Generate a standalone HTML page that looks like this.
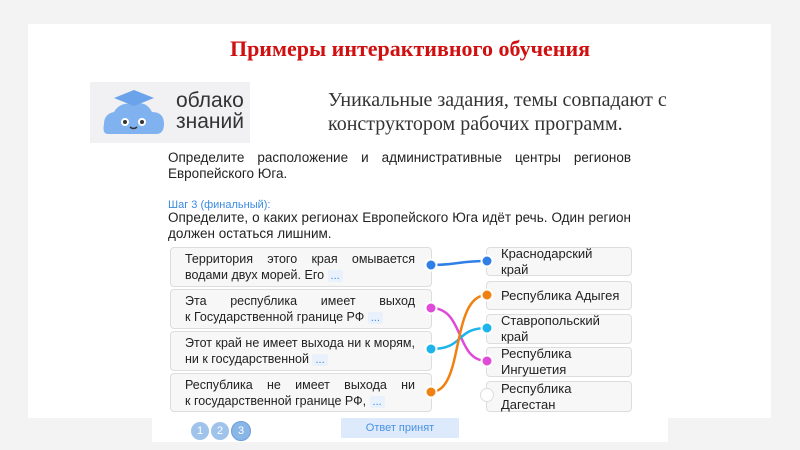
<!DOCTYPE html>
<html><head><meta charset="utf-8"><style>
body{margin:0;width:800px;height:450px;background:#f3f3f3;position:relative;overflow:hidden;font-family:"Liberation Sans","DejaVu Sans",sans-serif}
.abs{position:absolute}
.slide{left:28px;top:24px;width:743px;height:394px;background:#fff}
.panel{left:152px;top:400px;width:516px;height:42px;background:#fff}
h1{position:absolute;left:0;width:820px;top:36px;margin:0;text-align:center;font:bold 22px "Liberation Serif",serif;color:#d01010}
.sub{left:328px;top:88px;font:20px/24px "Liberation Serif",serif;color:#333}
.t{color:#222;font-size:13.5px;line-height:16px;text-align:justify;text-align-last:left}
.box{position:absolute;background:#f7f7f7;border:1px solid #ddd;border-radius:4px;box-sizing:border-box;font-size:12.5px;line-height:16px;color:#222}
.l{left:170px;width:262px;padding:3px 16px 0 14px}
.l div:first-child{text-align:justify;text-align-last:justify;white-space:nowrap}
.r{left:486px;width:146px;padding:0 0 0 14px;display:flex;align-items:center;font-size:13px}
.d{background:#e8f1fc;color:#3a8ae0;padding:0 3px;border-radius:2px;font-size:11px}
.c{position:absolute;width:18px;height:18px;border-radius:50%;text-align:center;line-height:18px;color:#fff;font-size:11px;background:#9fc3ea;top:422px}
</style></head><body>
<div class="abs slide"></div>
<div class="abs panel"></div>
<h1>Примеры интерактивного обучения</h1>
<div class="abs" style="left:90px;top:82px;width:160px;height:61px;background:#f1f1f3"></div>
<svg class="abs" style="left:100px;top:86px" width="70" height="54" viewBox="0 0 70 54">
<path d="M8 48 Q2 48 4 38 Q4 28 14 26 Q20 16 32 18 Q46 14 52 26 Q64 26 64 38 Q64 48 56 48 Z" fill="#7fb2ef"/>
<path d="M14 12 L34 4 L54 12 L34 20 Z" fill="#6aa3ea"/>
<circle cx="25" cy="36" r="4" fill="#fff"/><circle cx="25" cy="36" r="2" fill="#333"/>
<circle cx="42" cy="36" r="4" fill="#fff"/><circle cx="42" cy="36" r="2" fill="#333"/>
<path d="M30 41 Q33.5 44 37 41" stroke="#333" stroke-width="1.5" fill="none"/>
</svg>
<div class="abs" style="left:176px;top:90px;font-size:21px;line-height:21px;color:#333">облако<br>знаний</div>
<div class="abs sub">Уникальные задания, темы совпадают с<br>конструктором рабочих программ.</div>
<div class="abs t" style="left:168px;top:150px;width:463px">Определите расположение и административные центры регионов Европейского Юга.</div>
<div class="abs" style="left:168px;top:199px;font-size:11px;color:#3a8ae0">Шаг 3 (финальный):</div>
<div class="abs t" style="left:168px;top:210px;width:463px">Определите, о каких регионах Европейского Юга идёт речь. Один регион должен остаться лишним.</div>

<div class="box l" style="top:247px;height:40px"><div>Территория этого края омывается</div><div>водами двух морей. Его <span class="d">...</span></div></div>
<div class="box l" style="top:289px;height:40px"><div>Эта республика имеет выход</div><div>к Государственной границе РФ <span class="d">...</span></div></div>
<div class="box l" style="top:331px;height:40px"><div>Этот край не имеет выхода ни к морям,</div><div>ни к государственной <span class="d">...</span></div></div>
<div class="box l" style="top:373px;height:39px"><div>Республика не имеет выхода ни</div><div>к государственной границе РФ, <span class="d">...</span></div></div>

<div class="box r" style="top:247px;height:29px">Краснодарский<br>край</div>
<div class="box r" style="top:281px;height:29px">Республика Адыгея</div>
<div class="box r" style="top:314px;height:30px">Ставропольский<br>край</div>
<div class="box r" style="top:347px;height:30px">Республика<br>Ингушетия</div>
<div class="box r" style="top:381px;height:31px">Республика<br>Дагестан</div>

<svg class="abs" style="left:0;top:0" width="800" height="450">
<g fill="none" stroke-width="2.5">
<path d="M431 265 C455 265 460 261 487 261" stroke="#2f7fe6"/>
<path d="M431 308 C465 308 455 361 487 361" stroke="#e04ad8"/>
<path d="M431 349 C465 349 455 328 487 328" stroke="#1db4ec"/>
<path d="M431 392 C465 392 450 295 487 295" stroke="#f08010"/>
</g>
<g stroke="#fff" stroke-width="2">
<circle cx="431" cy="265" r="5.5" fill="#2f7fe6"/><circle cx="487" cy="261" r="5.5" fill="#2f7fe6"/>
<circle cx="431" cy="308" r="5.5" fill="#e04ad8"/><circle cx="487" cy="361" r="5.5" fill="#e04ad8"/>
<circle cx="431" cy="349" r="5.5" fill="#1db4ec"/><circle cx="487" cy="328" r="5.5" fill="#1db4ec"/>
<circle cx="431" cy="392" r="5.5" fill="#f08010"/><circle cx="487" cy="295" r="5.5" fill="#f08010"/>
</g>
<circle cx="487" cy="395" r="6.5" fill="#fff" stroke="#ddd"/>
</svg>

<div class="c" style="left:191px">1</div>
<div class="c" style="left:211px">2</div>
<div class="c" style="left:231px;background:#8ab6e6;border:1px solid #6a9edc;top:421px">3</div>
<div class="abs" style="left:341px;top:418px;width:118px;height:20px;background:#dceafb;color:#4a90e2;font-size:11px;text-align:center;line-height:20px">Ответ принят</div>
</body></html>
